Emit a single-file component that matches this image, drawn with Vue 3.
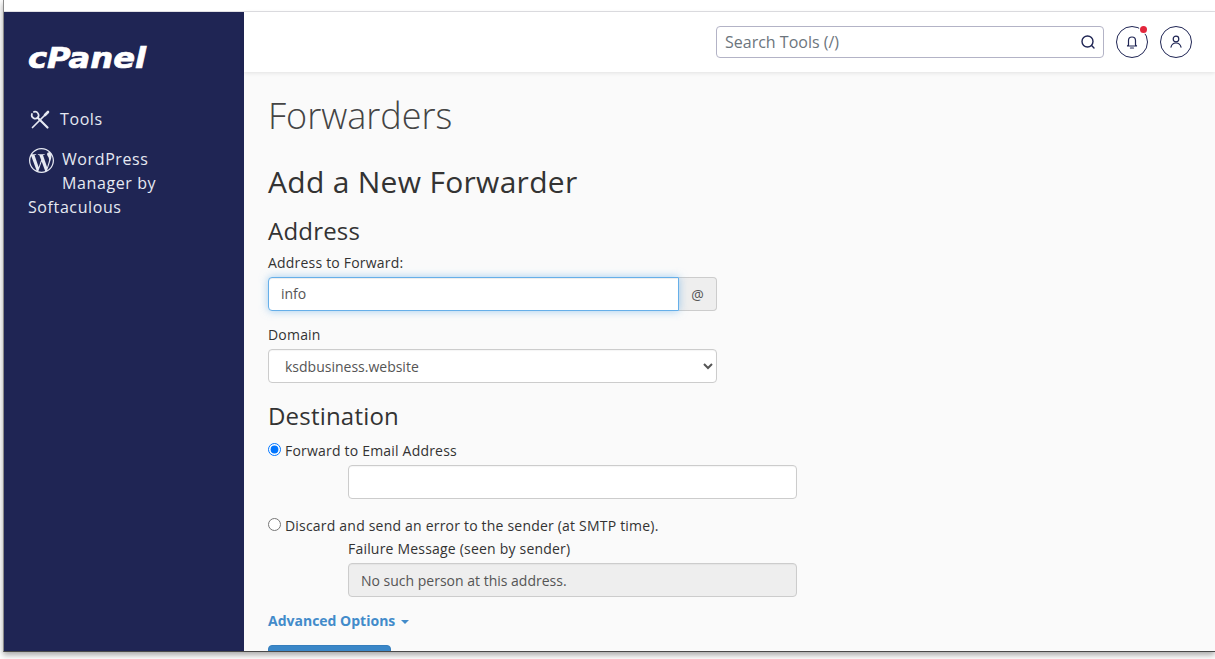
<template>
  <div class="screen">
    <div class="window">
      <div class="top-strip" />
      <div class="body">
        <aside class="sidebar">
          <div class="logo">cPanel</div>
          <nav class="nav">
            <a class="nav-item tools">
              <svg class="tools-icon" width="20" height="20" viewBox="0 0 20 20" fill="none" stroke="currentColor"
                stroke-width="1.7" stroke-linecap="round" stroke-linejoin="round">
                <path d="M2.500 17.500 14.500 5.500" />
                <path d="M15 5l3-3" stroke-width="2.600" />
                <path d="M1.900 3.900A3.600 3.600 0 0 0 7.700 7.700" />
                <path d="M3.900 1.900A3.600 3.600 0 0 1 7.700 7.700" />
                <path d="M7.700 7.700 17.500 17.500" stroke-width="2.200" />
              </svg>
              <span>Tools</span>
            </a>
            <a class="nav-item wp">
              <span class="wp-float">
                <svg width="25" height="25" viewBox="0 0 24 24" fill="currentColor">
                  <path d="M21.469 6.825c.84 1.537 1.318 3.3 1.318 5.175 0 3.979-2.156 7.456-5.363 9.325l3.295-9.527c.615-1.54.82-2.771.82-3.864 0-.405-.026-.78-.07-1.11m-7.981.105c.647-.03 1.232-.105 1.232-.105.582-.075.514-.93-.067-.899 0 0-1.755.135-2.88.135-1.064 0-2.85-.15-2.85-.15-.585-.03-.661.855-.075.885 0 0 .54.061 1.125.09l1.68 4.605-2.37 7.08L5.354 6.9c.649-.03 1.234-.1 1.234-.1.585-.075.516-.93-.065-.896 0 0-1.746.138-2.874.138-.2 0-.438-.008-.69-.015C4.911 3.15 8.235 1.215 12 1.215c2.809 0 5.365 1.072 7.286 2.833-.046-.003-.091-.009-.141-.009-1.06 0-1.812.923-1.812 1.914 0 .89.513 1.643 1.06 2.531.411.72.89 1.643.89 2.977 0 .915-.354 1.994-.821 3.479l-1.075 3.585-3.9-11.61.001.014zM12 22.784c-1.059 0-2.081-.153-3.048-.437l3.237-9.406 3.315 9.087c.024.053.05.101.078.149-1.12.393-2.325.609-3.582.609M1.211 12c0-1.564.336-3.05.935-4.39L7.29 21.709C3.694 19.96 1.212 16.271 1.211 12M12 0C5.385 0 0 5.385 0 12s5.385 12 12 12 12-5.385 12-12S18.615 0 12 0" />
                </svg>
              </span>
              WordPress Manager by Softaculous
            </a>
          </nav>
        </aside>

        <div class="right">
          <header class="topbar">
            <div class="search">
              <span class="search-text">Search Tools (/)</span>
              <svg width="16" height="16" viewBox="0 0 16 16" fill="none" stroke="#1f2554" stroke-width="1.4" stroke-linecap="round">
                <circle cx="7.500" cy="7.500" r="5.500" />
                <path d="M11.600 11.600 14 14" />
              </svg>
            </div>
            <button class="round-btn">
              <svg width="16" height="16" viewBox="0 0 16 16" fill="none" stroke="#1f2554" stroke-width="1.2" stroke-linecap="round" stroke-linejoin="round">
                <path d="M4.500 11V6.500a3.500 3.500 0 0 1 7 0V11l1 1h-9z" />
                <path d="M6.500 14h3" />
              </svg>
              <span class="dot" />
            </button>
            <button class="round-btn">
              <svg width="16" height="16" viewBox="0 0 16 16" fill="none" stroke="#1f2554" stroke-width="1.2" stroke-linecap="round">
                <circle cx="8" cy="5" r="2.800" />
                <path d="M3 13.200c.5-2.500 2.600-4.200 5-4.200s4.500 1.700 5 4.200" />
              </svg>
            </button>
          </header>

          <main class="main">
            <h1>Forwarders</h1>
            <h2>Add a New Forwarder</h2>
            <h3>Address</h3>

            <label class="label first">Address to Forward:</label>
            <div class="input-group">
              <input class="control focused" value="info" />
              <span class="addon">@</span>
            </div>

            <label class="label domain">Domain</label>
            <select class="control select">
              <option>ksdbusiness.website</option>
            </select>

            <h3 class="dest">Destination</h3>
            <label class="radio">
              <input type="radio" name="dest" checked />
              <span>Forward to Email Address</span>
            </label>
            <div class="indent">
              <input class="control" />
            </div>

            <label class="radio second">
              <input type="radio" name="dest" />
              <span>Discard and send an error to the sender (at SMTP time).</span>
            </label>
            <div class="indent fail-box">
              <label class="label fail">Failure Message (seen by sender)</label>
              <input class="control" disabled value="No such person at this address." />
            </div>

            <a class="advanced">Advanced Options <span class="caret" /></a>
            <button class="submit" />
          </main>
        </div>
      </div>
    </div>
  </div>
</template>

<script setup>
</script>

<style>
html, body {
  margin: 0;
  background: #fff;
}
</style>

<style scoped>
.screen {
  height: 659px;
  overflow: hidden;
  padding-left: 3px;
  box-sizing: border-box;
  background: #fff;
  font-family: "Open Sans", "Noto Sans", sans-serif;
  color: #333;
}

.window {
  height: 652px;
  box-sizing: border-box;
  display: flex;
  flex-direction: column;
  border-left: 1px solid #8a8a8a;
  border-bottom: 1px solid #4a4a4a;
  box-shadow: 0 3px 6px rgba(0, 0, 0, 0.35);
}

.top-strip {
  height: 11px;
  flex-shrink: 0;
  background: #fff;
  border-bottom: 1px solid #e0e0e4;
}

.body {
  flex: 1;
  min-height: 0;
  display: flex;
}

.sidebar {
  width: 240px;
  flex-shrink: 0;
  box-sizing: border-box;
  background: #1f2554;
  color: #e6e9f2;
  padding: 30px 24px 0;
}

.logo {
  font-family: "DejaVu Sans", sans-serif;
  font-weight: 700;
  font-style: italic;
  font-size: 29px;
  line-height: 33px;
  height: 33px;
  color: #fff;
  -webkit-text-stroke: 0.7px #fff;
  transform: scaleX(1.11);
  transform-origin: left center;
}

.nav {
  margin-top: 32px;
}

.nav-item {
  display: block;
  font-size: 16px;
  line-height: 24px;
  letter-spacing: 0.6px;
}

.tools {
  display: flex;
  align-items: center;
}

.tools-icon {
  margin: 2px 10px 0 2px;
}

.wp {
  margin-top: 16px;
}

.wp-float {
  float: left;
  width: 34px;
  height: 40px;
}

.wp-float svg {
  display: block;
  margin: 1px 0 0 1px;
}

.right {
  flex: 1;
  min-width: 0;
  display: flex;
  flex-direction: column;
  background: #fafafa;
}

.topbar {
  height: 60px;
  flex-shrink: 0;
  box-sizing: border-box;
  background: #fff;
  box-shadow: 0 1px 4px rgba(0, 0, 0, 0.1);
  display: flex;
  align-items: center;
  justify-content: flex-end;
  gap: 12px;
  padding-right: 23px;
  position: relative;
}

.search {
  width: 388px;
  height: 32px;
  box-sizing: border-box;
  border: 1px solid #b3b3c6;
  border-radius: 4px;
  display: flex;
  align-items: center;
  justify-content: space-between;
  padding: 0 7px 0 8px;
}

.search-text {
  font-size: 16px;
  color: #6c757d;
}

.round-btn {
  width: 32px;
  height: 32px;
  padding: 0;
  border: 1px solid #1f2554;
  border-radius: 50%;
  background: #fff;
  display: flex;
  align-items: center;
  justify-content: center;
  position: relative;
}

.dot {
  position: absolute;
  top: -1px;
  right: 0;
  width: 7px;
  height: 7px;
  border-radius: 50%;
  background: #e2263c;
  box-shadow: 0 0 0 1px #fff;
}

.main {
  flex: 1;
  min-height: 0;
  overflow: hidden;
  padding: 0 24px;
}

h1 {
  margin: 20px 0 0;
  font-size: 36px;
  line-height: 48px;
  font-weight: 300;
  color: #444;
}

h2 {
  margin: 24px 0 0;
  font-size: 30px;
  line-height: 36px;
  font-weight: 400;
  letter-spacing: 0.3px;
}

h3 {
  margin: 15px 0 0;
  font-size: 24px;
  line-height: 32px;
  font-weight: 400;
  letter-spacing: 0.2px;
}

.label {
  display: block;
  font-size: 14px;
  line-height: 20px;
  font-weight: 500;
  letter-spacing: 0.2px;
}

.first {
  margin-top: 6px;
}

.domain {
  margin-top: 14px;
  margin-bottom: 4px;
}

.control {
  display: block;
  box-sizing: border-box;
  width: 449px;
  height: 34px;
  padding: 6px 12px;
  font-family: inherit;
  font-size: 14px;
  color: #555;
  background: #fff;
  border: 1px solid #ccc;
  border-radius: 4px;
  outline: none;
  box-shadow: inset 0 1px 1px rgba(0, 0, 0, 0.04);
}

.control:disabled {
  background: #eee;
  color: #555;
  -webkit-text-fill-color: #555;
}

.input-group {
  display: flex;
  width: 449px;
  margin-top: 4px;
}

.focused {
  flex: 1;
  min-width: 0;
  padding: 5px 12px 7px;
  border-color: #66afe9;
  border-radius: 4px 0 0 4px;
  box-shadow: inset 0 1px 1px rgba(0, 0, 0, 0.075), 0 0 8px rgba(102, 175, 233, 0.6);
  position: relative;
}

.addon {
  width: 38px;
  box-sizing: border-box;
  background: #eee;
  border: 1px solid #ccc;
  border-left: none;
  border-radius: 0 4px 4px 0;
  display: flex;
  align-items: center;
  justify-content: center;
  font-size: 14px;
  color: #555;
}

.select {
  padding-left: 12px;
}

.dest {
  margin-top: 17px;
}

.radio {
  display: flex;
  align-items: center;
  font-size: 14px;
  line-height: 20px;
  font-weight: 500;
  letter-spacing: 0.2px;
  margin-top: 9px;
}

.radio input {
  width: 13px;
  height: 13px;
  margin: -4px 4px 0 0;
}

.second {
  margin-top: 17px;
}

.indent {
  margin: 4px 0 0 80px;
}

.fail-box {
  margin-top: 3px;
}

.fail {
  margin-bottom: 4px;
}

.advanced {
  display: block;
  margin-top: 14px;
  font-size: 14px;
  line-height: 20px;
  font-weight: 700;
  color: #428bca;
}

.caret {
  display: inline-block;
  margin-left: 2px;
  vertical-align: middle;
  border-top: 4px solid #428bca;
  border-left: 4px solid transparent;
  border-right: 4px solid transparent;
}

.submit {
  display: block;
  margin-top: 14px;
  width: 123px;
  height: 34px;
  background: #3a87c8;
  border: 1px solid #357ebd;
  border-radius: 4px;
}
</style>
